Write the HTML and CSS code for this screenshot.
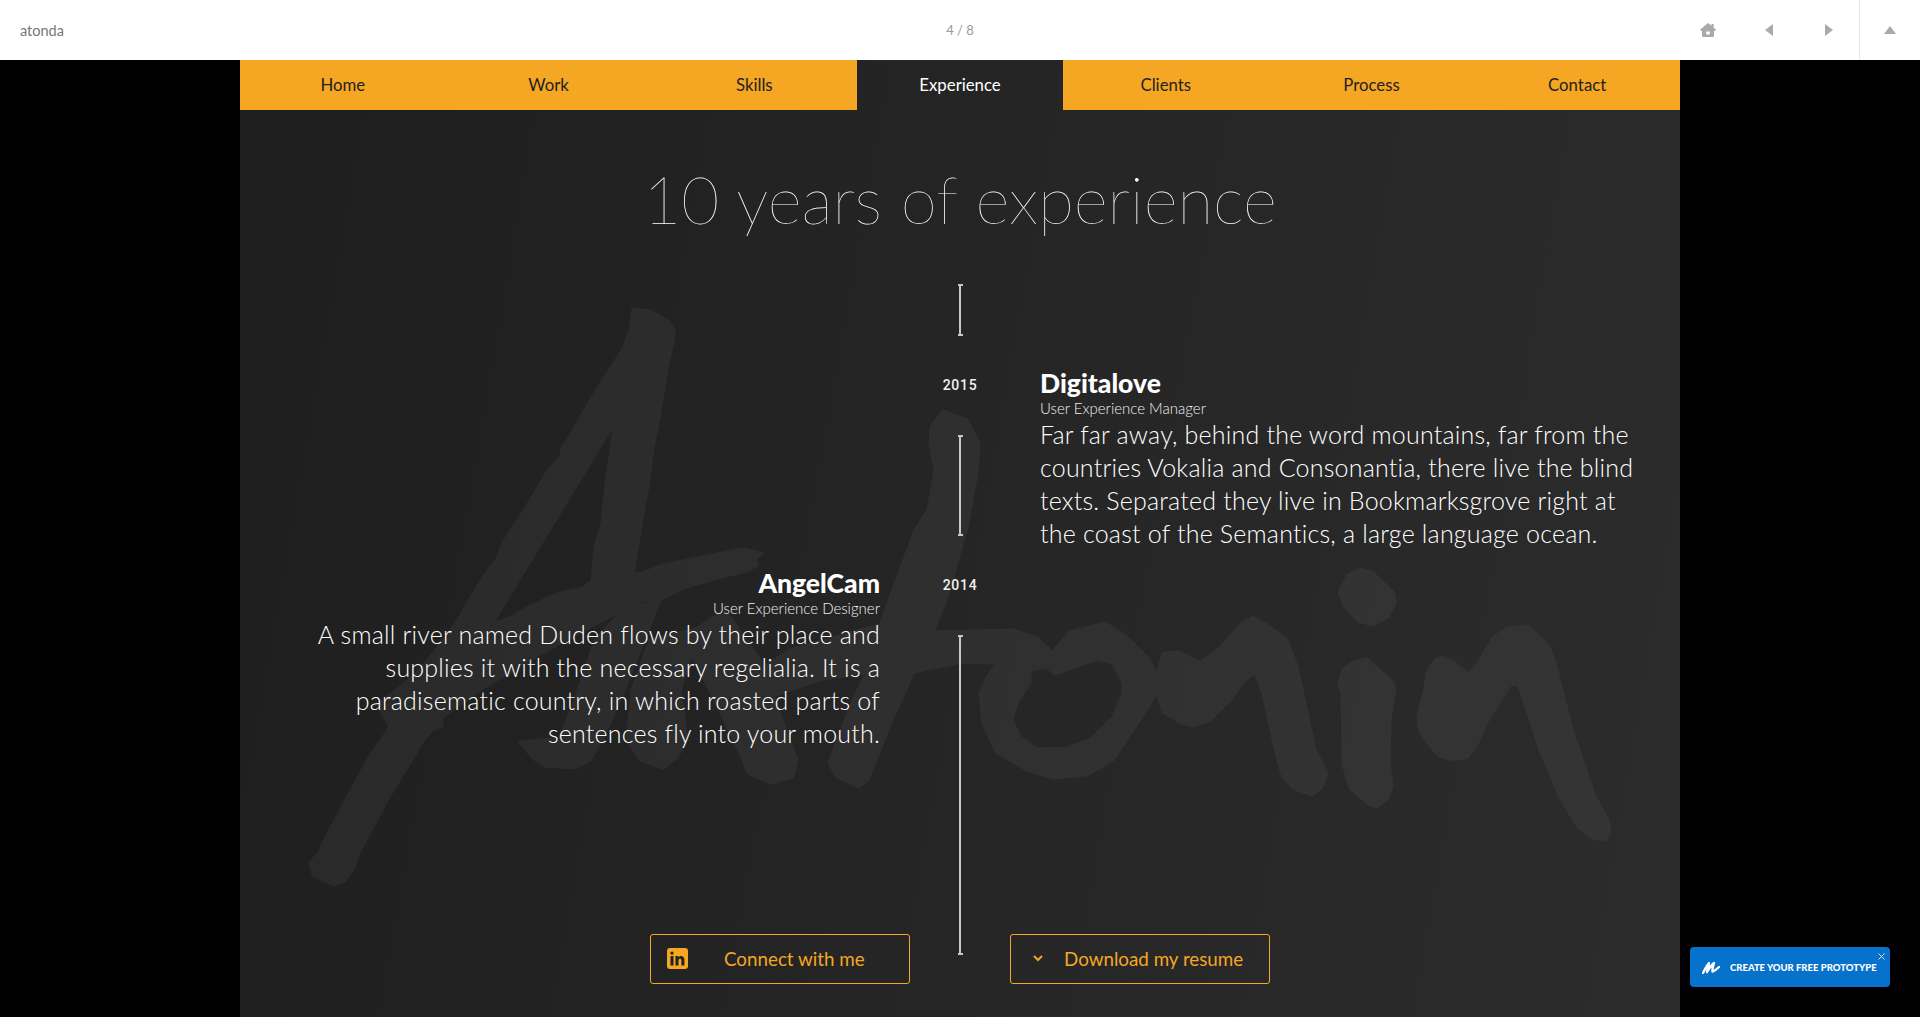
FILE: index.html
```html
<!DOCTYPE html>
<html lang="en">
<head>
<meta charset="utf-8">
<title>atonda</title>
<link rel="stylesheet" href="styles.css">
</head>
<body>
<header class="topbar">
  <div class="brand">atonda</div>
  <div class="pager">4 / 8</div>
  <div class="tools">
    <svg class="tool tool-home" width="16" height="14" viewBox="0 0 16 14"><path fill-rule="evenodd" d="M8 0l3.4 2.8V1h2.2v3.6L16 6.800 15 8h-1v5a1 1 0 0 1-1 1H3a1 1 0 0 1-1-1V8H1L0 6.800zM6.200 8.600v3h3.600v-3z"/></svg>
    <svg class="tool tool-prev" width="8" height="12" viewBox="0 0 8 12"><path d="M8 0v12L0 6z"/></svg>
    <svg class="tool tool-next" width="8" height="12" viewBox="0 0 8 12"><path d="M0 0v12l8-6z"/></svg>
    <div class="tool-up"><svg width="12" height="8" viewBox="0 0 12 8"><path d="M6 0l6 8H0z"/></svg></div>
  </div>
</header>

<main class="stage">
  <svg class="signature" viewBox="240 60 1440 957" width="1440" height="957" aria-hidden="true">
    <g class="sig-ink">
      <path fill-rule="evenodd" d="M633 309L650 311 667 320 674 330 673 341 667 369 660 413 653 448 647 492 640 531 633 574 643 573 663 565 707 556 742 549 762 553 755 559 757 565 747 571 717 578 683 588 660 600 643 600 623 610 580 632 530 660 480 690 442 717 442 727 433 729 423 741 387 800 360 851 353 869 345 881 333 885 313 875 310 863 320 851 323 843 350 792 370 756 390 727 378 705 413 677 433 654 457 622 480 582 497 559 503 543 533 496 547 472 561 456 562 448 570 436 590 401 610 369 623 349 630 330Z M615 422L492 624 510 618 530 606 557 594 583 588 592 581 595 547 602 523 607 476Z"/>
      <path d="M623 610L660 600 640 650 620 700 603 738 590 760 575 768 545 766 533 758 520 742 560 738 575 700 595 640Z"/>
      <path d="M650 640L700 628 680 690 687 740 677 757 663 768 640 760 627 740 632 690Z"/>
      <path d="M683 637L725 610 760 660 797 760 793 777 770 783 748 773 740 753 715 700Z"/>
      <path fill-rule="evenodd" d="M931 427L943 411 967 420 979 443 977 473 967 527 947 597 933 632 1013 630 1037 638 1052 652 1070 632 1105 623 1127 637 1147 657 1157 675 1163 653 1180 652 1200 663 1220 648 1243 622 1253 617 1270 627 1287 640 1297 667 1307 713 1315 750 1327 773 1322 787 1312 795 1293 788 1283 777 1277 757 1263 693 1255 672 1243 682 1230 700 1210 720 1193 726 1180 722 1163 712 1157 693 1133 730 1113 760 1087 775 1053 778 1027 770 997 753 983 723 980 693 987 677 997 663 963 662 913 672 907 687 893 717 873 767 868 780 858 787 837 777 829 763 835 747 853 700 867 672 820 680 760 700 730 690 790 650 860 630 880 625 893 590 915 530 928 510 935 470 930 443Z M1030 670L1047 667 1055 674 1097 659 1113 663 1123 683 1123 693 1113 717 1090 740 1067 748 1037 749 1020 737 1012 720 1017 703 1030 683Z"/>
      <path d="M1339 592L1348 575 1360 569 1372 572 1393 592 1395 603 1388 617 1373 625 1358 621 1345 607Z"/>
      <path d="M1339 683L1343 670 1353 662 1367 659 1393 682 1395 690 1390 720 1389 763 1392 787 1388 798 1377 807 1367 803 1350 788 1343 763 1342 693Z"/>
      <path d="M1425 688L1427 673 1435 660 1443 657 1453 662 1469 674 1477 665 1493 638 1507 628 1528 626 1548 645 1555 663 1572 730 1595 797 1608 820 1610 832 1605 840 1593 838 1578 827 1560 797 1540 750 1520 688 1517 684 1510 685 1487 722 1475 748 1467 757 1452 760 1438 755 1420 732 1418 717Z"/>
    </g>
  </svg>

  <nav class="nav">
    <a class="nav-item">Home</a>
    <a class="nav-item">Work</a>
    <a class="nav-item">Skills</a>
    <a class="nav-item is-active">Experience</a>
    <a class="nav-item">Clients</a>
    <a class="nav-item">Process</a>
    <a class="nav-item">Contact</a>
  </nav>

  <h1 class="title">10 years of experience</h1>

  <section class="timeline">
    <div class="cell-center row-intro"><span class="bar bar-intro"></span></div>

    <div class="cell-center">
      <div class="year">2015</div>
      <span class="bar bar-2015"></span>
    </div>
    <article class="entry entry-right">
      <h2 class="entry-name">Digitalove</h2>
      <div class="entry-role">User Experience Manager</div>
      <p class="entry-text">Far far away, behind the word mountains, far from the<br>countries Vokalia and Consonantia, there live the blind<br>texts. Separated they live in Bookmarksgrove right at<br>the coast of the Semantics, a large language ocean.</p>
    </article>

    <article class="entry entry-left">
      <h2 class="entry-name">AngelCam</h2>
      <div class="entry-role">User Experience Designer</div>
      <p class="entry-text">A small river named Duden flows by their place and<br>supplies it with the necessary regelialia. It is a<br>paradisematic country, in which roasted parts of<br>sentences fly into your mouth.</p>
    </article>
    <div class="cell-center cell-2014">
      <div class="year">2014</div>
      <span class="bar bar-2014"></span>
    </div>

    <a class="btn btn-connect">
      <svg class="btn-in" width="21" height="21" viewBox="0 0 21 21"><path fill-rule="evenodd" d="M3 0h15a3 3 0 0 1 3 3v15a3 3 0 0 1-3 3H3a3 3 0 0 1-3-3V3a3 3 0 0 1 3-3zM3.500 8v9.500h3V8zM5 3.400a1.700 1.700 0 1 0 0 3.400 1.700 1.700 0 0 0 0-3.400zM8.500 8v9.500h3v-5c0-2.400 2.900-2.400 2.900 0v5h3v-5.800c0-4.200-4.500-4.600-6-2.200V8z"/></svg>
      <span>Connect with me</span>
    </a>
    <a class="btn btn-download">
      <svg class="btn-chev" width="10" height="7" viewBox="0 0 10 7"><path d="M1 1l4 4 4-4"/></svg>
      <span>Download my resume</span>
    </a>
  </section>
</main>

<a class="promo">
  <svg class="promo-logo" width="18" height="13" viewBox="0 0 18 13"><path d="M1 12C3 8 5 4 7 2 7 5 5 9 5 11 7 8 10 3 12 2 11 5 10 8 10.500 10.500 12 10 15 8 17 6"/></svg>
  <span>CREATE YOUR FREE PROTOTYPE</span>
  <svg class="promo-x" width="7" height="7" viewBox="0 0 7 7"><path d="M.5.500l6 6M6.500.500l-6 6"/></svg>
</a>
</body>
</html>
```
FILE: styles.css
```css
* { box-sizing: border-box; }
html, body { margin: 0; height: 1017px; overflow: hidden; }
body { background: #000; font-family: "Lato", "Liberation Sans", sans-serif; position: relative; }

.topbar { height: 60px; background: #fff; display: flex; align-items: center; position: relative; }
.brand { font-size: 14.5px; color: #777; padding-left: 20px; }
.pager { position: absolute; left: 0; right: 0; text-align: center; font-size: 13px; color: #999; }
.tools { margin-left: auto; display: flex; align-items: center; height: 60px; }
.tool { fill: #aaa; display: block; }
.tool-home { margin-right: 49px; }
.tool-prev { margin-right: 52px; }
.tool-next { margin-right: 26px; }
.tool-up { width: 61px; height: 60px; border-left: 1px solid #e8e8e8; display: flex; align-items: center; justify-content: center; }
.tool-up svg { fill: #aaa; display: block; }

.stage { position: relative; width: 1440px; height: 957px; margin: 0 auto; overflow: hidden; background: linear-gradient(100deg, #1e1e1e 0%, #2c2c2c 100%); }
.signature { position: absolute; left: 0; top: 0; display: block; }
.sig-ink { fill: #fff; stroke: #fff; stroke-width: 3; stroke-linejoin: round; opacity: .045; }

.nav { position: relative; display: flex; height: 50px; }
.nav-item { flex: 1; display: flex; align-items: center; justify-content: center; padding-bottom: 2px; font-size: 16.8px; color: #222; background: #f5a623; }
.nav-item.is-active { background: transparent; color: #fff; }

.title { position: relative; margin: 54px 0 0; height: 70px; line-height: 70px; text-align: center; font-size: 65.5px; font-weight: 100; color: #fff; }

.timeline { position: relative; margin-top: 50px; display: grid; grid-template-columns: 640px 160px 640px; grid-template-rows: 84px 200px 366px 50px; color: #fff; }
.cell-center { grid-column: 2; display: flex; flex-direction: column; align-items: center; }
.row-intro { grid-row: 1; }
.cell-2014 { grid-row: 3 / span 2; }
.year { height: 34px; line-height: 34px; margin-bottom: 33px; font-family: "Roboto", "Liberation Sans", sans-serif; font-size: 14px; font-weight: 500; letter-spacing: .7px; color: #f0f0f0; }
.bar { display: block; width: 5px; border-top: 2px solid #c8c8c8; border-bottom: 2px solid #c8c8c8; background: linear-gradient(#c8c8c8, #c8c8c8) center / 2px 100% no-repeat; }
.bar-intro { height: 52px; }
.bar-2015 { height: 101px; }
.bar-2014 { height: 320px; }

.entry-right { grid-column: 3; grid-row: 2; padding-right: 40px; }
.entry-left { grid-column: 1; grid-row: 3; text-align: right; }
.entry-name { margin: 0; font-size: 26.5px; line-height: 30px; font-weight: 900; color: #fff; }
.entry-role { font-size: 15px; line-height: 20px; font-weight: 300; color: #f0f0f0; }
.entry-text { margin: 0; font-size: 25px; line-height: 33px; font-weight: 300; letter-spacing: .2px; color: #fff; white-space: nowrap; }

.btn { grid-row: 4; height: 50px; width: 260px; border: 1px solid #f5a623; border-radius: 3px; display: flex; align-items: center; padding-bottom: 2px; color: #f5a623; font-size: 18.8px; }
.btn-connect { grid-column: 1; justify-self: end; margin-right: -30px; padding-left: 16px; gap: 36px; }
.btn-download { grid-column: 3; margin-left: -30px; padding-left: 22px; gap: 21px; }
.btn-in { fill: #f5a623; display: block; }
.btn-chev { fill: none; stroke: #f5a623; stroke-width: 2; display: block; }

.promo { position: absolute; left: 1690px; top: 947px; width: 200px; height: 40px; background: #0672cb; border-radius: 4px; display: flex; align-items: center; padding-left: 12px; gap: 10px; color: #fff; font-size: 9.5px; font-weight: 900; }
.promo-logo { fill: none; stroke: #fff; stroke-width: 2.4; stroke-linecap: round; stroke-linejoin: round; display: block; }
.promo-x { position: absolute; right: 5px; top: 6px; fill: none; stroke: #cfe3f5; stroke-width: 1; }
```
